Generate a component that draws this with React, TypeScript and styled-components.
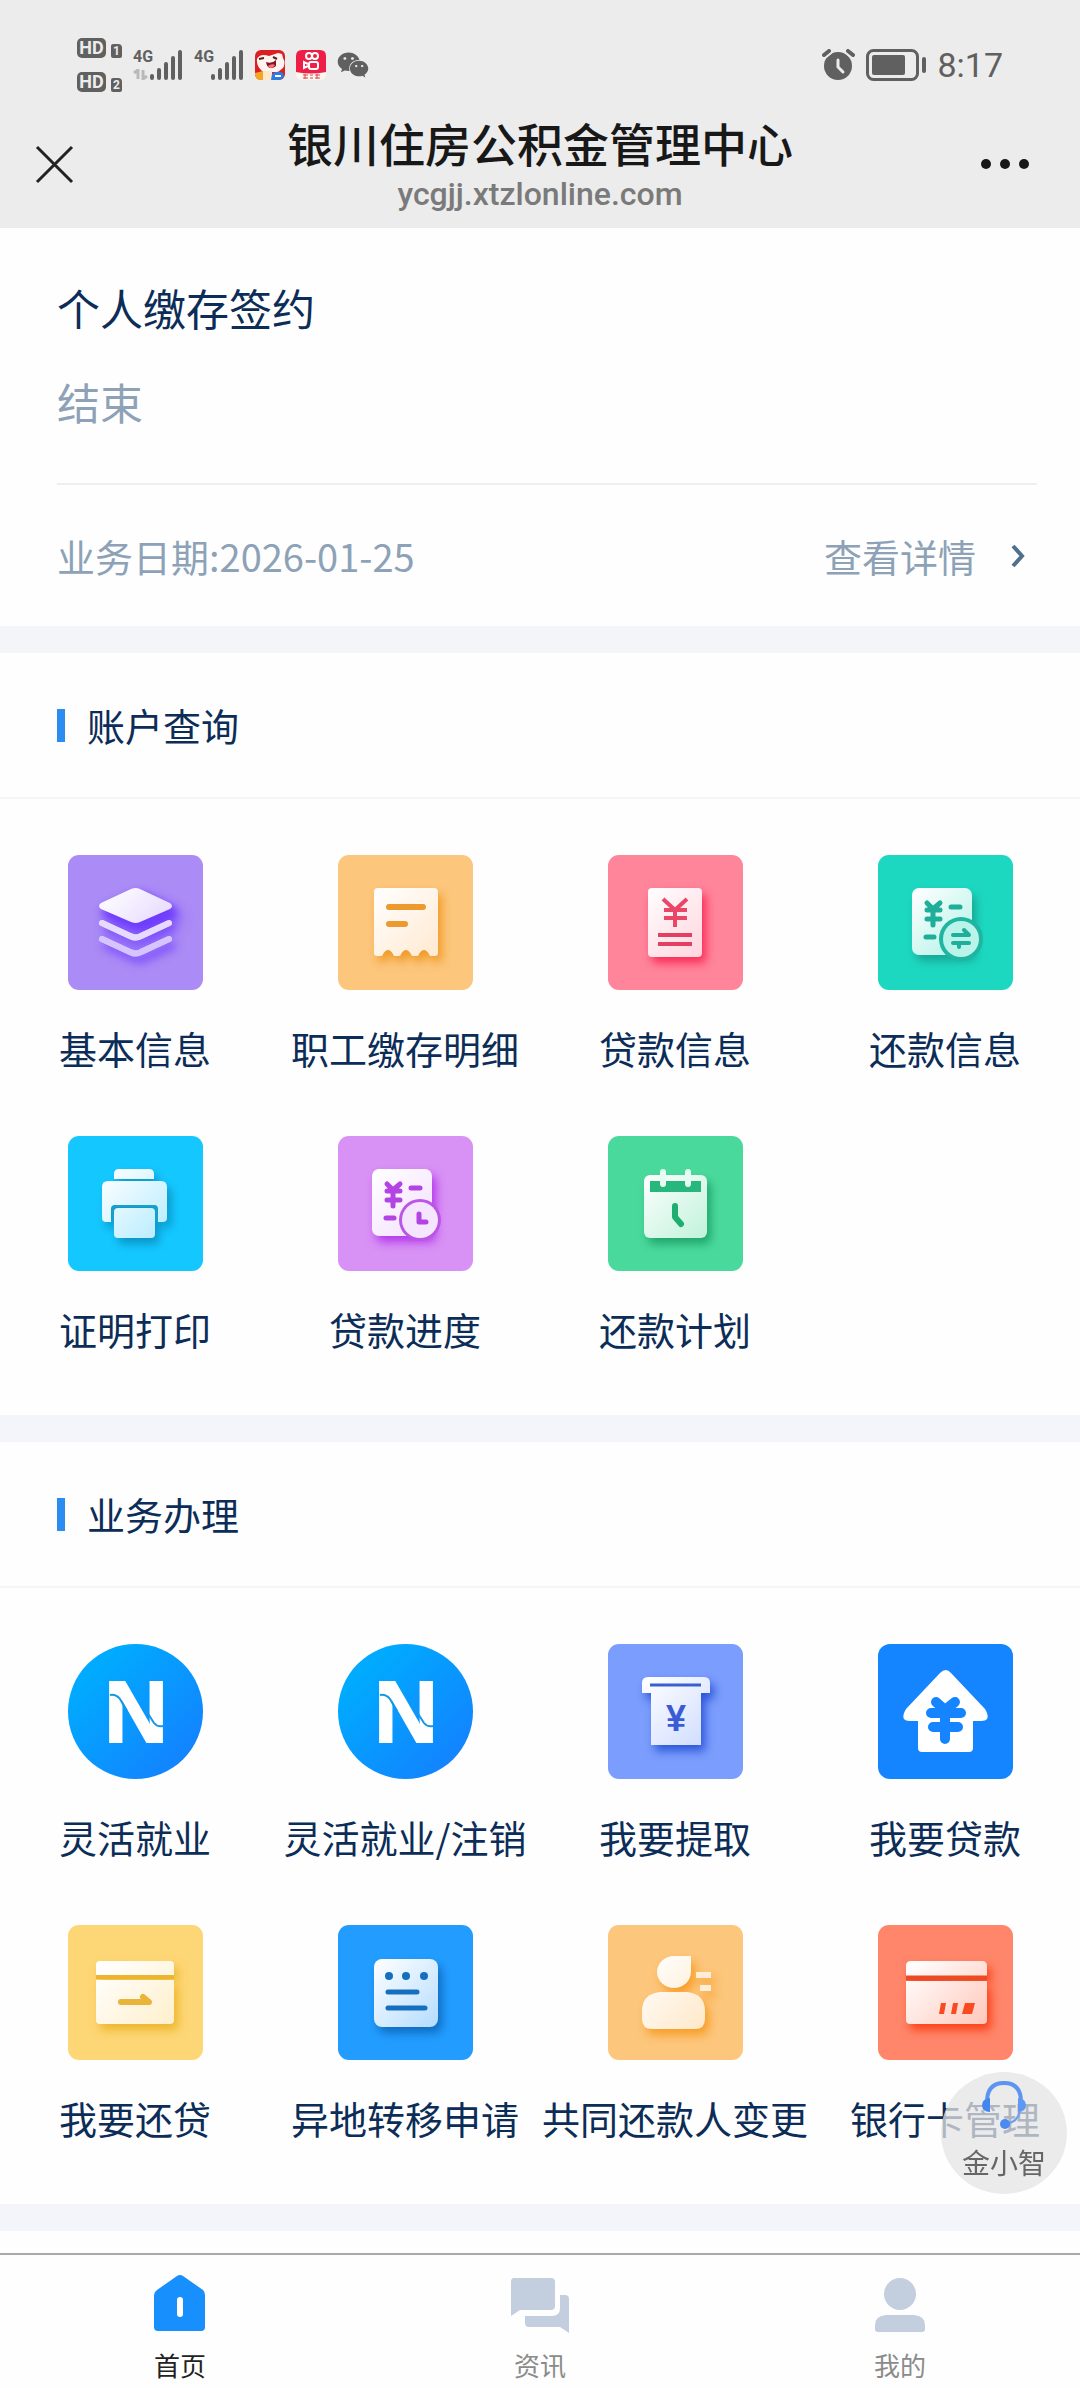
import React, { useId } from "react";
import styled, { createGlobalStyle } from "styled-components";
import { FaWeixin } from "react-icons/fa";

const GlobalStyle = createGlobalStyle`
  *, *::before, *::after { box-sizing: border-box; }
  body {
    margin: 0;
    background: #fefefe;
    font-family: "Noto Sans CJK SC", "Noto Sans", sans-serif;
    color: #0c2d57;
  }
  h1, h2, p, ul { margin: 0; padding: 0; font-weight: 400; }
  ul { list-style: none; }
  a { color: inherit; text-decoration: none; }
  button { border: 0; padding: 0; background: none; font: inherit; color: inherit; cursor: pointer; }
  svg { display: block; }
`;

/* ---------- page shell ---------- */

const Page = styled.div`
  display: flex;
  flex-direction: column;
  min-height: 100vh;
`;

const Header = styled.header`
  background: #ececec;
`;

const Main = styled.main`
  flex: 1;
  padding-bottom: 20px;
`;

/* ---------- phone status bar ---------- */

const StatusBar = styled.div`
  display: flex;
  justify-content: space-between;
  align-items: center;
  height: 112px;
  padding: 17px 77px 0;
  color: #606060;
`;

const StatusGroup = styled.div`
  display: flex;
  align-items: center;
  gap: 11px;
`;

const SimStack = styled.div`
  display: flex;
  flex-direction: column;
  gap: 14px;
`;

const SimRow = styled.div`
  display: flex;
  align-items: flex-end;
  gap: 5px;
  font-family: Roboto, sans-serif;
  font-weight: 700;
  color: #ececec;
`;

const HdBadge = styled.span`
  width: 29px;
  height: 20px;
  border-radius: 5px;
  background: #606060;
  font-size: 18px;
  line-height: 20px;
  text-align: center;
`;

const SimNumber = styled.span`
  width: 11px;
  height: 14px;
  border-radius: 2px 4px 2px 2px;
  background: #606060;
  font-size: 12px;
  line-height: 14px;
  text-align: center;
`;

const Signal = styled.div`
  display: flex;
  align-items: flex-end;
`;

const Network = styled.div`
  display: flex;
  flex-direction: column;
  justify-content: space-between;
  width: 17px;
  height: 30px;
  font-family: Roboto, sans-serif;
  font-size: 16px;
  font-weight: 700;
  line-height: 14px;
`;

const Clock = styled.time`
  font-family: Roboto, sans-serif;
  font-size: 34px;
  line-height: 40px;
`;

/* ---------- title bar ---------- */

const TitleBar = styled.div`
  display: grid;
  grid-template-columns: 1fr auto 1fr;
  align-items: center;
  padding: 0 50px 12px 34px;
`;

const BarButton = styled.button<{ $end?: boolean }>`
  display: flex;
  align-items: center;
  justify-self: ${(p) => (p.$end ? "end" : "start")};
  height: 60px;
`;

const TitleBlock = styled.div`
  padding-left: 16px;
  text-align: center;
`;

const Title = styled.h1`
  font-size: 46px;
  font-weight: 500;
  line-height: 60px;
  color: #181818;
`;

const Domain = styled.p`
  font-family: Roboto, sans-serif;
  font-size: 32px;
  font-weight: 500;
  line-height: 44px;
  color: #7a7a7a;
`;

/* ---------- record card ---------- */

const Card = styled.section`
  padding: 0 43px 0 57px;
  border-bottom: 27px solid #f4f5f9;
`;

const CardTop = styled.div`
  display: flex;
  flex-direction: column;
  gap: 34px;
  padding: 49px 0 52px;
  border-bottom: 2px solid #eeeeee;
`;

const CardTitle = styled.h2`
  font-size: 43px;
  line-height: 60px;
`;

const CardStatus = styled.p`
  font-size: 43px;
  line-height: 60px;
  color: #8da2b7;
`;

const CardFoot = styled.div`
  display: flex;
  justify-content: space-between;
  align-items: center;
  height: 141px;
  font-size: 38px;
  line-height: 56px;
  color: #8da2b7;
`;

const DetailLink = styled.a`
  display: flex;
  align-items: center;
  gap: 34px;
  padding-right: 11px;
`;

/* ---------- service sections ---------- */

const Section = styled.section`
  border-bottom: 27px solid #f4f5fa;
`;

const SectionHead = styled.div`
  display: flex;
  align-items: center;
  gap: 22px;
  height: 146px;
  padding-left: 57px;
  border-bottom: 2px solid #f5f5f6;
`;

const Marker = styled.span`
  width: 8px;
  height: 33px;
  background: #2b8cf1;
`;

const SectionTitle = styled.h2`
  font-size: 38px;
  line-height: 56px;
`;

const Grid = styled.ul`
  display: grid;
  grid-template-columns: repeat(4, 1fr);
  padding: 28px 0 26px;
`;

const Service = styled.a`
  display: flex;
  flex-direction: column;
  align-items: center;
  gap: 30px;
  height: 281px;
  padding-top: 28px;
  font-size: 38px;
  line-height: 56px;
  white-space: nowrap;
`;

const Glyph = styled.g<{ $shadow: string }>`
  filter: drop-shadow(4px 6px 5px ${(p) => p.$shadow});
`;

/* ---------- floating assistant and tab bar ---------- */

const Assistant = styled.button`
  position: fixed;
  right: 13px;
  bottom: 194px;
  z-index: 2;
  display: flex;
  flex-direction: column;
  align-items: center;
  gap: 12px;
  width: 126px;
  height: 122px;
  padding-top: 9px;
  border-radius: 50%;
  background: rgba(228, 228, 228, 0.75);
  font-size: 28px;
  line-height: 40px;
  color: #666666;
`;

const TabBar = styled.nav`
  position: sticky;
  bottom: 0;
  display: grid;
  grid-template-columns: repeat(3, 1fr);
  height: 135px;
  border-top: 2px solid #a9a9a9;
  background: #fefefe;
`;

const Tab = styled.a<{ $active?: boolean }>`
  display: flex;
  flex-direction: column;
  align-items: center;
  gap: 12px;
  padding-top: 18px;
  font-size: 26px;
  line-height: 40px;
  color: ${(p) => (p.$active ? "#222222" : "#8b8b8b")};
`;

/* ---------- icon drawings ---------- */

type TileProps = {
  bg: string;
  shadow: string;
  tint: string;
  draw: (fill: string) => React.ReactNode;
  details?: React.ReactNode;
};

function Tile({ bg, shadow, tint, draw, details }: TileProps) {
  const id = useId();
  return (
    <svg width="135" height="135" viewBox="0 0 135 135" aria-hidden="true">
      <defs>
        <linearGradient id={id} gradientUnits="userSpaceOnUse" x1="35" y1="35" x2="100" y2="102">
          <stop offset="0" stopColor="#ffffff" />
          <stop offset="1" stopColor={tint} />
        </linearGradient>
      </defs>
      <rect width="135" height="135" rx="11" fill={bg} />
      <Glyph $shadow={shadow}>{draw(`url(#${id})`)}</Glyph>
      {details}
    </svg>
  );
}

function Lines({ d, color, width }: { d: string; color: string; width: number }) {
  return (
    <path d={d} fill="none" stroke={color} strokeWidth={width} strokeLinecap="round" strokeLinejoin="round" />
  );
}

const LayersIcon = () => (
  <Tile
    bg="#ab8bf5"
    shadow="#6f3dff"
    tint="#dccbff"
    draw={(fill) => (
      <>
        <path d="M34 68 62 81Q68 84 73 81L101 68" fill="none" stroke="#e6dbff" strokeWidth="6" strokeLinecap="round" />
        <path d="M34 84 62 97Q68 100 73 97L101 84" fill="none" stroke="#d6c4ff" strokeWidth="6" strokeLinecap="round" />
        <Glyph $shadow="#6f3dff">
          <path d="M33 48 63 34Q68 32 72 34L102 48Q106 51 102 54L72 67Q68 69 63 67L33 54Q29 51 33 48Z" fill={fill} />
        </Glyph>
      </>
    )}
    details={
      <>
        <Lines d="M34 68 62 81Q68 84 73 81L101 68" color="#e6dbff" width={6} />
        <Lines d="M34 84 62 97Q68 100 73 97L101 84" color="#d6c4ff" width={6} />
      </>
    }
  />
);

const ReceiptIcon = () => (
  <Tile
    bg="#fcc67c"
    shadow="#f09a28"
    tint="#ffe9d0"
    draw={(fill) => (
      <path
        d="M40 33H96Q100 33 100 37V98Q100 101 97 101H93Q91 101 91 99Q86 91 81 99Q81 101 79 101H75Q73 101 73 99Q68 91 63 99Q63 101 61 101H57Q55 101 55 99Q50 91 45 99Q45 101 43 101H39Q36 101 36 98V37Q36 33 40 33Z"
        fill={fill}
      />
    )}
    details={<Lines d="M51 52H85M51 69H67" color="#ec9a30" width={6} />}
  />
);

const LoanInfoIcon = () => (
  <Tile
    bg="#ff859a"
    shadow="#fb2a58"
    tint="#ffd3dc"
    draw={(fill) => <rect x="40" y="33" width="54" height="69" rx="4" fill={fill} />}
    details={
      <>
        <path d="M55 44 67 55 79 44M56 55H79M56 63H79M67 54V72" fill="none" stroke="#ea4668" strokeWidth="4" />
        <path d="M50 80H84M50 89H84" stroke="#e23f62" strokeWidth="4" />
      </>
    }
  />
);

const ledger = (fill: string) => <rect x="34" y="33" width="60" height="67" rx="7" fill={fill} />;
const ledgerMarks = "M49 48 55 54 62 48M49 55H62M49 64H62M55 55V70M73 52H82M48 82H56";

const RepayInfoIcon = () => (
  <Tile
    bg="#1dd8c0"
    shadow="#16a694"
    tint="#a8f1e4"
    draw={ledger}
    details={
      <>
        <Lines d={ledgerMarks} color="#1fae9a" width={5} />
        <circle cx="83" cy="84" r="22" fill="#1fb5a1" />
        <circle cx="83" cy="84" r="18" fill="#b9f3e9" />
        <Lines d="M75 80H91L86 75M91 88H75M81 92V88" color="#1fae9a" width={4} />
      </>
    }
  />
);

const PrinterIcon = () => (
  <Tile
    bg="#14c8ff"
    shadow="#0b94c6"
    tint="#b3ebff"
    draw={(fill) => (
      <>
        <path d="M46 43V38Q46 33 51 33H81Q86 33 86 38V43Z" fill={fill} />
        <path d="M40 45H93Q99 45 99 51V82Q99 86 95 86H90V73Q90 69 86 69H47Q43 69 43 73V86H38Q34 86 34 82V51Q34 45 40 45Z" fill={fill} />
        <rect x="46" y="72" width="41" height="30" rx="4" fill={fill} />
      </>
    )}
    details={<path d="M45 85V73Q45 70 48 70H85Q88 70 88 73V85" fill="none" stroke="#1ba0cc" strokeWidth="2" />}
  />
);

const LoanProgressIcon = () => (
  <Tile
    bg="#d891f5"
    shadow="#b437ea"
    tint="#f2dcff"
    draw={ledger}
    details={
      <>
        <Lines d={ledgerMarks} color="#b443e3" width={5} />
        <circle cx="82" cy="84" r="21" fill="#bb55e6" />
        <circle cx="82" cy="84" r="18" fill="#f6e5fe" />
        <Lines d="M81 78V86H88" color="#b443e3" width={5} />
      </>
    }
  />
);

const CalendarIcon = () => (
  <Tile
    bg="#4ad99c"
    shadow="#20a56c"
    tint="#c0f2da"
    draw={(fill) => <rect x="36" y="39" width="63" height="63" rx="6" fill={fill} />}
    details={
      <>
        <rect x="42" y="45" width="51" height="11" fill="#27b67b" />
        <Lines d="M55 36V48M80 36V48" color="#e6fbf1" width={6} />
        <Lines d="M67 70V81L73 88" color="#1fae72" width={6} />
      </>
    }
  />
);

const BrandIcon = () => {
  const id = useId();
  return (
    <svg width="135" height="135" viewBox="0 0 135 135" aria-hidden="true">
      <defs>
        <linearGradient id={id} x1="0.2" y1="0.2" x2="0.9" y2="0.9">
          <stop offset="0" stopColor="#00aafe" />
          <stop offset="1" stopColor="#1481ff" />
        </linearGradient>
      </defs>
      <circle cx="67.500" cy="67.500" r="67.500" fill={`url(#${id})`} />
      <text
        x="68"
        y="98"
        textAnchor="middle"
        fontFamily="Liberation Sans, sans-serif"
        fontSize="88"
        fontWeight="700"
        fill="#ffffff"
        stroke="#ffffff"
        strokeWidth="2"
      >
        N
      </text>
      <path d="M42 51Q48 50 52 55L59 67M77 65 86 79Q89 83 95 82" fill="none" stroke="#1497e6" strokeWidth="2" />
    </svg>
  );
};

const WithdrawIcon = () => (
  <Tile
    bg="#7b9dfd"
    shadow="#2c55d8"
    tint="#cfdcff"
    draw={(fill) => (
      <path d="M40 33H96Q102 33 102 39V49H93V101H43V49H34V39Q34 33 40 33Z" fill={fill} />
    )}
    details={
      <>
        <path d="M42 41H93" stroke="#3c5fcf" strokeWidth="3" />
        <text x="68" y="87" textAnchor="middle" fontFamily="Liberation Sans, sans-serif" fontSize="36" fontWeight="700" fill="#3a5bd6">
          ¥
        </text>
      </>
    }
  />
);

const HouseLoanIcon = () => (
  <svg width="135" height="135" viewBox="0 0 135 135" aria-hidden="true">
    <rect width="135" height="135" rx="12" fill="#1585ff" />
    <path
      d="M62 29Q68 23 73 29L107 65Q114 77 103 77H95V104Q95 108 91 108H44Q40 108 40 104V77H32Q21 77 28 65Z"
      fill="#ffffff"
    />
    <Lines d="M58 58 67 66 77 58M53 69H83M55 83H80M67 66V95" color="#1585ff" width={10} />
  </svg>
);

const RepayIcon = () => (
  <Tile
    bg="#fdd675"
    shadow="#edb62c"
    tint="#fff0cd"
    draw={(fill) => (
      <>
        <path d="M28 50V40Q28 36 32 36H102Q106 36 106 40V50Z" fill={fill} />
        <path d="M28 55H106V95Q106 99 102 99H32Q28 99 28 95Z" fill={fill} />
      </>
    )}
    details={
      <>
        <path d="M28 52H106" stroke="#ecb52f" strokeWidth="4" />
        <Lines d="M53 77H81L75 72" color="#e9b437" width={6} />
      </>
    }
  />
);

const TransferIcon = () => (
  <Tile
    bg="#229dff"
    shadow="#0f6cc0"
    tint="#b4dcff"
    draw={(fill) => <rect x="36" y="34" width="64" height="68" rx="8" fill={fill} />}
    details={
      <>
        <circle cx="51" cy="51" r="4" fill="#1470bf" />
        <circle cx="68" cy="51" r="4" fill="#1470bf" />
        <circle cx="86" cy="51" r="4" fill="#1470bf" />
        <Lines d="M50 67H79M50 83H87" color="#1470bf" width={5} />
      </>
    }
  />
);

const PersonIcon = () => (
  <Tile
    bg="#fcc67c"
    shadow="#f89d27"
    tint="#ffe8c9"
    draw={(fill) => (
      <>
        <path d="M66 31H83V47A17 16 0 1 1 66 31Z" fill={fill} />
        <path d="M52 67H79Q97 69 97 86V94Q97 104 87 104H44Q34 104 34 94V86Q34 69 52 67Z" fill={fill} />
        <path d="M88 50H103M92 63H103" stroke="#ffedd6" strokeWidth="6" />
      </>
    )}
  />
);

const BankCardIcon = () => (
  <Tile
    bg="#ff866a"
    shadow="#fb4117"
    tint="#ffcabe"
    draw={(fill) => (
      <>
        <path d="M28 51V41Q28 36 33 36H104Q109 36 109 41V51Z" fill={fill} />
        <path d="M28 56H109V95Q109 99 105 99H32Q28 99 28 95Z" fill={fill} />
      </>
    )}
    details={
      <>
        <path d="M28 53H109" stroke="#ec4a22" strokeWidth="5" />
        <path d="M63 78H68L66 89H61ZM75 78H80L78 89H73ZM87 78H97L94 89H84Z" fill="#fb4a20" />
      </>
    }
  />
);

const SignalBars = () => (
  <svg width="33" height="30" viewBox="0 0 33 30" aria-hidden="true">
    <path d="M2 26V28M9 20V28M16 14V28M23 8V28M30 2V28" stroke="#606060" strokeWidth="4" strokeLinecap="round" />
  </svg>
);

const DataArrows = () => (
  <svg width="16" height="11" viewBox="0 0 16 11" aria-hidden="true">
    <path d="M1 4 5 1V10M10 1V10L14 7" fill="none" stroke="#b9b9b9" strokeWidth="3" />
  </svg>
);

const CartoonAppIcon = () => (
  <svg width="30" height="30" viewBox="0 0 30 30" aria-hidden="true">
    <rect width="30" height="30" rx="6" fill="#dc1f24" />
    <path d="M2 9Q5 3 14 6L23 3 27 4 28 8Q31 13 28 18L23 22H8Q1 16 2 9Z" fill="#fff3f0" />
    <path d="M4 9 9 8M18 7 22 9" stroke="#552222" strokeWidth="2" />
    <path d="M11 12Q17 14 21 10L21 16Q19 18 16 18 12 18 11 12Z" fill="#7c1a22" />
    <path d="M13 16Q17 13 20 15 18 18 16 18 14 18 13 16Z" fill="#ff6f7e" />
    <path d="M0 23 8 21V30H5Q0 29 0 24Z" fill="#f5a623" />
    <path d="M8 21H17V30H8Z" fill="#ffe9c9" />
    <path d="M17 24Q22 20 28 23L29 27Q27 30 24 30H16Z" fill="#2c7be0" />
    <path d="M20 26H26" stroke="#ffffff" strokeWidth="2" />
  </svg>
);

const VideoAppIcon = () => (
  <svg width="30" height="30" viewBox="0 0 30 30" aria-hidden="true">
    <rect width="30" height="30" rx="6" fill="#fff5ee" />
    <path d="M0 22V6Q0 0 6 0H24Q30 0 30 6V22Q15 25 0 22Z" fill="#ee1f46" />
    <g fill="none" stroke="#ffffff" strokeWidth="2">
      <circle cx="13" cy="6" r="3" />
      <circle cx="19" cy="6" r="3" />
      <rect x="13" y="12" width="9" height="7" rx="2" />
      <path d="M12 14 8 12V18L12 16" />
    </g>
    <path d="M7 25H12M7 28H12M14 25H17M14 28H17M19 25H24M19 28H24M9 24V29M21 24V29" stroke="#d2464a" strokeWidth="1" />
  </svg>
);

const AlarmIcon = () => (
  <svg width="33" height="31" viewBox="0 0 33 31" aria-hidden="true">
    <circle cx="16" cy="17" r="14" fill="#606060" />
    <path d="M2 6 7 2M26 2 31 6" stroke="#ececec" strokeWidth="8" strokeLinecap="round" />
    <path d="M2 6 7 2M26 2 31 6" stroke="#606060" strokeWidth="4" strokeLinecap="round" />
    <path d="M16 11V18L21 23" fill="none" stroke="#ececec" strokeWidth="3" strokeLinecap="round" />
  </svg>
);

const BatteryIcon = () => (
  <svg width="60" height="32" viewBox="0 0 60 32" aria-hidden="true">
    <rect x="1.500" y="1.500" width="50" height="29" rx="6" fill="none" stroke="#606060" strokeWidth="3" />
    <rect x="6" y="6" width="33" height="20" rx="2" fill="#606060" />
    <path d="M58 10V22" stroke="#606060" strokeWidth="4" strokeLinecap="round" />
  </svg>
);

const HeadsetIcon = () => (
  <svg width="44" height="49" viewBox="0 0 44 49" aria-hidden="true">
    <path d="M5 21Q5 2 22 2T39 21" fill="none" stroke="#5b95f0" strokeWidth="4" />
    <path d="M8 17V31Q0 31 0 24 0 18 8 17Z" fill="#4585f2" />
    <path d="M36 17V31Q44 31 44 24 44 18 36 17Z" fill="#5f98f4" />
    <path d="M38 30Q36 41 24 43" fill="none" stroke="#6c9ff3" strokeWidth="2" />
    <circle cx="23" cy="43" r="5" fill="#4c8af2" />
  </svg>
);

const HomeIcon = () => (
  <svg width="52" height="60" viewBox="0 0 52 60" aria-hidden="true">
    <path d="M23 3Q26 1 29 3L49 17Q51 19 51 22V54Q51 58 47 58H4Q0 58 0 54V22Q0 19 3 17Z" fill="#178ffc" />
    <path d="M26 27V41" stroke="#ffffff" strokeWidth="6" strokeLinecap="round" />
  </svg>
);

const NewsIcon = () => (
  <svg width="60" height="60" viewBox="0 0 60 60" aria-hidden="true">
    <path d="M4 5H41Q45 5 45 9V33Q45 37 41 37H10L1 43V9Q1 5 4 5Z" fill="#c3cede" />
    <path d="M50 22H55Q59 22 59 26V60L50 54H19Q15 54 15 50V43H42Q50 43 50 35Z" fill="#c3cede" />
  </svg>
);

const MineIcon = () => (
  <svg width="50" height="60" viewBox="0 0 50 60" aria-hidden="true">
    <circle cx="25" cy="21" r="16" fill="#c3cede" />
    <path d="M11 42H39Q50 43 50 52V56Q50 59 47 59H3Q0 59 0 56V52Q0 43 11 42Z" fill="#c3cede" />
  </svg>
);

/* ---------- data ---------- */

type ServiceItem = { name: string; Icon: React.ComponentType };

const sections: { title: string; items: ServiceItem[] }[] = [
  {
    title: "账户查询",
    items: [
      { name: "基本信息", Icon: LayersIcon },
      { name: "职工缴存明细", Icon: ReceiptIcon },
      { name: "贷款信息", Icon: LoanInfoIcon },
      { name: "还款信息", Icon: RepayInfoIcon },
      { name: "证明打印", Icon: PrinterIcon },
      { name: "贷款进度", Icon: LoanProgressIcon },
      { name: "还款计划", Icon: CalendarIcon },
    ],
  },
  {
    title: "业务办理",
    items: [
      { name: "灵活就业", Icon: BrandIcon },
      { name: "灵活就业/注销", Icon: BrandIcon },
      { name: "我要提取", Icon: WithdrawIcon },
      { name: "我要贷款", Icon: HouseLoanIcon },
      { name: "我要还贷", Icon: RepayIcon },
      { name: "异地转移申请", Icon: TransferIcon },
      { name: "共同还款人变更", Icon: PersonIcon },
      { name: "银行卡管理", Icon: BankCardIcon },
    ],
  },
];

const tabs = [
  { name: "首页", Icon: HomeIcon, active: true },
  { name: "资讯", Icon: NewsIcon, active: false },
  { name: "我的", Icon: MineIcon, active: false },
];

export default function App() {
  return (
    <>
      <GlobalStyle />
      <Page>
        <Header>
          <StatusBar>
            <StatusGroup>
              <SimStack>
                {["1", "2"].map((n) => (
                  <SimRow key={n}>
                    <HdBadge>HD</HdBadge>
                    <SimNumber>{n}</SimNumber>
                  </SimRow>
                ))}
              </SimStack>
              <Signal>
                <Network>
                  4G
                  <DataArrows />
                </Network>
                <SignalBars />
              </Signal>
              <Signal>
                <Network>4G</Network>
                <SignalBars />
              </Signal>
              <CartoonAppIcon />
              <VideoAppIcon />
              <FaWeixin size={32} />
            </StatusGroup>
            <StatusGroup>
              <AlarmIcon />
              <BatteryIcon />
              <Clock>8:17</Clock>
            </StatusGroup>
          </StatusBar>
          <TitleBar>
            <BarButton type="button" aria-label="关闭">
              <svg width="40" height="40" viewBox="0 0 40 40" aria-hidden="true">
                <path d="M3 3 38 38M38 3 3 38" stroke="#222222" strokeWidth="3" />
              </svg>
            </BarButton>
            <TitleBlock>
              <Title>银川住房公积金管理中心</Title>
              <Domain>ycgjj.xtzlonline.com</Domain>
            </TitleBlock>
            <BarButton type="button" aria-label="更多" $end>
              <svg width="50" height="12" viewBox="0 0 50 12" aria-hidden="true">
                <circle cx="6" cy="6" r="5" fill="#181818" />
                <circle cx="25" cy="6" r="5" fill="#181818" />
                <circle cx="44" cy="6" r="5" fill="#181818" />
              </svg>
            </BarButton>
          </TitleBar>
        </Header>

        <Main>
          <Card>
            <CardTop>
              <CardTitle>个人缴存签约</CardTitle>
              <CardStatus>结束</CardStatus>
            </CardTop>
            <CardFoot>
              <span>业务日期:2026-01-25</span>
              <DetailLink href="#detail">
                查看详情
                <svg width="16" height="24" viewBox="0 0 16 24" aria-hidden="true">
                  <path d="M3 2 12 12 3 22" fill="none" stroke="#51708e" strokeWidth="4" />
                </svg>
              </DetailLink>
            </CardFoot>
          </Card>

          {sections.map(({ title, items }) => (
            <Section key={title}>
              <SectionHead>
                <Marker />
                <SectionTitle>{title}</SectionTitle>
              </SectionHead>
              <Grid>
                {items.map(({ name, Icon }) => (
                  <li key={name}>
                    <Service href="#service">
                      <Icon />
                      {name}
                    </Service>
                  </li>
                ))}
              </Grid>
            </Section>
          ))}
        </Main>

        <TabBar>
          {tabs.map(({ name, Icon, active }) => (
            <Tab key={name} href="#tab" $active={active}>
              <Icon />
              {name}
            </Tab>
          ))}
        </TabBar>
      </Page>

      <Assistant type="button">
        <HeadsetIcon />
        金小智
      </Assistant>
    </>
  );
}
